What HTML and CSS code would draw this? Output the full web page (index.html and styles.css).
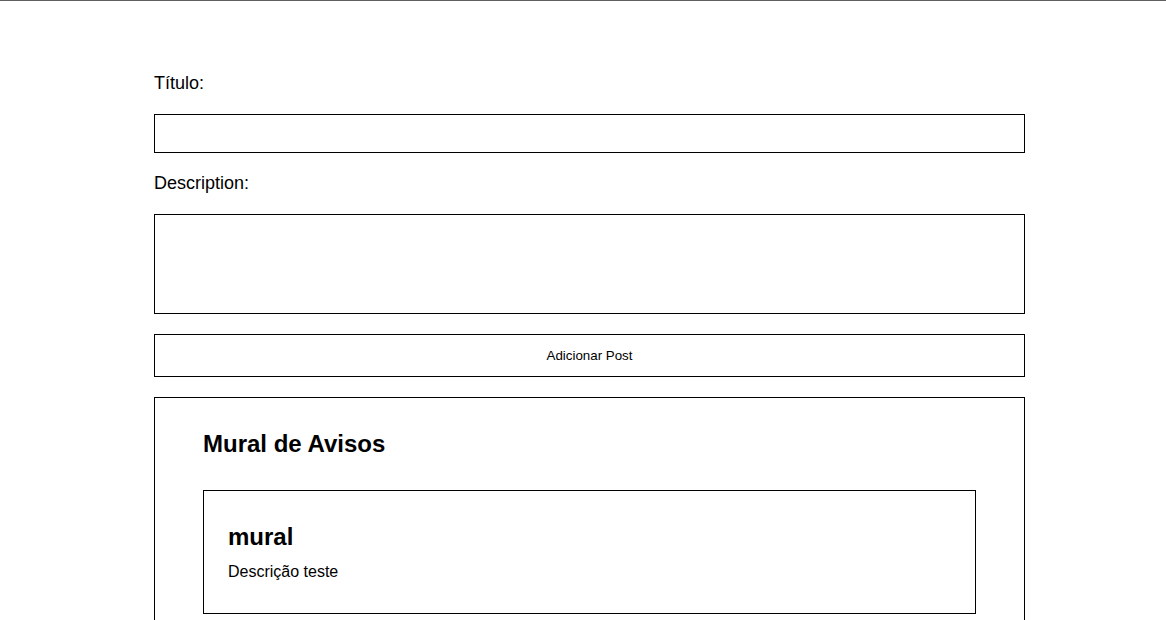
FILE: index.html
```html
<!DOCTYPE html>
<html lang="pt">
<head>
<meta charset="utf-8">
<title>Mural de Avisos</title>
<link rel="stylesheet" href="styles.css">
</head>
<body>
<div class="topline"></div>
<main class="page">
  <form class="post-form">
    <label class="field-label" for="titulo">Título:</label>
    <input class="field-input" id="titulo" type="text">
    <label class="field-label" for="desc">Description:</label>
    <textarea class="field-textarea" id="desc"></textarea>
    <button class="add-btn" type="button">Adicionar Post</button>
  </form>
  <section class="mural">
    <h2 class="mural-title">Mural de Avisos</h2>
    <article class="card">
      <h3 class="card-title">mural</h3>
      <p class="card-text">Descrição teste</p>
    </article>
  </section>
</main>
</body>
</html>
```
FILE: styles.css
```css
* { box-sizing: border-box; }
html, body {
  margin: 0;
  padding: 0;
  background: #fff;
  font-family: "Liberation Sans", Arial, sans-serif;
  color: #000;
}
.topline {
  height: 1px;
  background: #5f5f5f;
}
.page {
  width: 871px;
  margin-left: 154px;
  padding-top: 72px;
  display: flex;
  flex-direction: column;
  gap: 20px;
}
.post-form {
  display: flex;
  flex-direction: column;
  gap: 20px;
}
.field-label {
  font-size: 18px;
  line-height: 21px;
  display: block;
}
.field-input {
  height: 39px;
  border: 1px solid #000;
  border-radius: 0;
  padding: 0 8px;
  font: 16px "Liberation Sans", Arial, sans-serif;
  outline: none;
}
.field-textarea {
  height: 100px;
  border: 1px solid #000;
  border-radius: 0;
  padding: 8px;
  font: 16px "Liberation Sans", Arial, sans-serif;
  resize: none;
  outline: none;
  display: block;
}
.add-btn {
  height: 43px;
  background: #fff;
  border: 1px solid #000;
  border-radius: 0;
  font: 13.33px "Liberation Sans", Arial, sans-serif;
  color: #000;
}
.mural {
  border: 1px solid #000;
  padding: 32px 48px;
  display: flex;
  flex-direction: column;
  gap: 32px;
}
.mural-title {
  margin: 0;
  font-size: 24px;
  font-weight: bold;
}
.card {
  border: 1px solid #000;
  padding: 32px 24px;
}
.card-title {
  margin: 0 0 12px;
  font-size: 24px;
  font-weight: bold;
}
.card-text {
  margin: 0;
  font-size: 16px;
}
```
